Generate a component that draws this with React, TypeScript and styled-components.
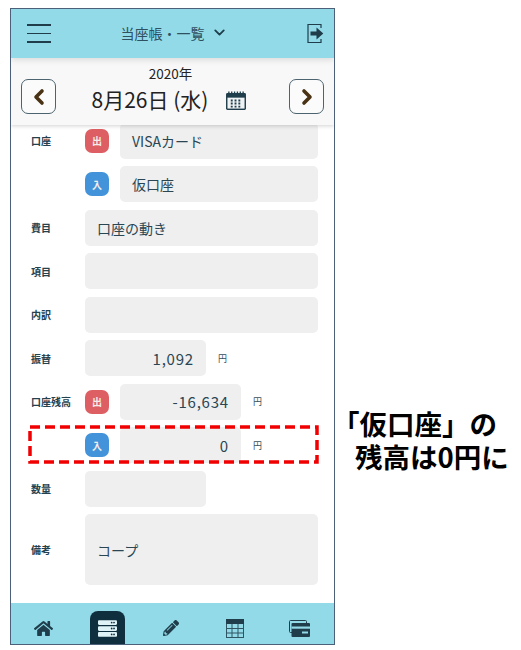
import styled, {createGlobalStyle} from "styled-components";
import {ChevronDown, ChevronLeft, ChevronRight} from "lucide-react";
import {FaHome, FaPencilAlt, FaServer} from "react-icons/fa";

const GlobalStyle = createGlobalStyle`
    * {
        box-sizing: border-box;
    }
    html, body {
        margin: 0;
        background: #fff;
    }
    body {
        font-family: "Noto Sans CJK JP", "Noto Sans", sans-serif;
        color: #1f3d4a;
    }
`

type RowData = {
    label?: string;
    badge?: "out" | "in";
    value?: string;
    short?: boolean;
    number?: boolean;
    unit?: boolean;
    tall?: boolean;
    marked?: boolean;
}

const rows: RowData[] = [
    {label: "口座", badge: "out", value: "VISAカード"},
    {badge: "in", value: "仮口座"},
    {label: "費目", value: "口座の動き"},
    {label: "項目"},
    {label: "内訳"},
    {label: "振替", value: "1,092", short: true, number: true, unit: true},
    {label: "口座残高", badge: "out", value: "-16,634", short: true, number: true, unit: true},
    {badge: "in", value: "0", short: true, number: true, unit: true, marked: true},
    {label: "数量", short: true},
    {label: "備考", value: "コープ", tall: true},
]

const Row = ({label, badge, value, short, number, unit, tall, marked}: RowData) => (
    <FormRow $tall={tall}>
        <Label>{label}</Label>
        {badge && <Badge $kind={badge}>{badge === "out" ? "出" : "入"}</Badge>}
        <Field $short={short} $badged={!!badge} $number={number}>{value}</Field>
        {unit && <Unit>円</Unit>}
        {marked && (
            <DashedMark width="291" height="39" viewBox="0 0 291 39">
                <rect x="2" y="2" width="287" height="35" fill="none" stroke="#f00000" strokeWidth="3.5" strokeDasharray="10 5"/>
            </DashedMark>
        )}
    </FormRow>
)

export default function App() {
    return (
        <Page>
            <GlobalStyle/>
            <Phone>
                <Header>
                    <Burger>
                        <span/>
                        <span/>
                        <span/>
                    </Burger>
                    <HeaderTitle>
                        当座帳・一覧
                        <ChevronDown size={17} strokeWidth={2.6}/>
                    </HeaderTitle>
                    <svg width="18" height="21" viewBox="0 0 18 21">
                        <path d="M14 5V1.5H1v18h13V16" fill="none" stroke="#1f3d4a" strokeWidth="1.2"/>
                        <path d="M3.5 8.5h6V4.6l6.8 5.9-6.8 5.9v-3.9h-6z" fill="#1f3d4a"/>
                    </svg>
                </Header>
                <DateBar>
                    <NavButton><ChevronLeft size={24} strokeWidth={3.6}/></NavButton>
                    <DateBlock>
                        <Year>2020年</Year>
                        <DateLine>
                            8月26日 (水)
                            <svg width="20" height="19" viewBox="0 0 21 20">
                                <rect y="2" width="21" height="18" rx="1.5" fill="#1f3d4a"/>
                                <rect x="1.5" y="7" width="18" height="11.5" fill="#eef2f3"/>
                                <path d="M3 0.5v3M6 0.5v3M9 0.5v3M12 0.5v3M15 0.5v3M18 0.5v3" stroke="#1f3d4a" strokeWidth="1.4"/>
                                <path d="M5 9h2v2H5zM9 9h2v2H9zM13 9h2v2h-2zM5 12.2h2v2H5zM9 12.2h2v2H9zM13 12.2h2v2h-2zM9 15.4h2v2H9zM13 15.4h2v2h-2zM5 15.4h2v2H5z" fill="#1f3d4a"/>
                            </svg>
                        </DateLine>
                    </DateBlock>
                    <NavButton><ChevronRight size={24} strokeWidth={3.6}/></NavButton>
                </DateBar>
                <Form>
                    {rows.map((row, i) => <Row key={i} {...row}/>)}
                </Form>
                <Footer>
                    <FooterItem><FaHome size={19}/></FooterItem>
                    <FooterItem $active><FaServer size={19}/></FooterItem>
                    <FooterItem><FaPencilAlt size={16}/></FooterItem>
                    <FooterItem>
                        <svg width="18" height="19" viewBox="0 0 18 19">
                            <rect x="0.5" y="0.5" width="17" height="18" fill="none" stroke="#2f5563"/>
                            <rect width="18" height="5" fill="#1f3d4a"/>
                            <path d="M6 5v13M12 5v13M1 9.5h16M1 14h16" stroke="#2f5563" strokeWidth="1"/>
                        </svg>
                    </FooterItem>
                    <FooterItem>
                        <svg width="21" height="17" viewBox="0 0 21 17">
                            <rect x="0.5" y="0.5" width="17" height="12" rx="1" fill="none" stroke="#1f3d4a"/>
                            <rect x="2.5" y="3" width="18.5" height="14" rx="1" fill="#1f3d4a"/>
                            <rect x="2.5" y="6.5" width="18.5" height="2.2" fill="#92dae8"/>
                            <rect x="13" y="11.5" width="6" height="2" fill="#92dae8"/>
                        </svg>
                    </FooterItem>
                </Footer>
            </Phone>
            <Callout>
                <CalloutLine>「仮口座」の</CalloutLine>
                <CalloutLine $indent>残高は0円に</CalloutLine>
            </Callout>
        </Page>
    );
}

const Page = styled.div`
    width: 521px;
    height: 650px;
    padding: 8px 0 0 10px;
    display: flex;
    overflow: hidden;
`

const Phone = styled.div`
    width: 325px;
    height: 637px;
    border: 1px solid #4c6079;
    display: flex;
    flex-direction: column;
    overflow: hidden;
    flex-shrink: 0;
`

const Header = styled.header`
    height: 49px;
    flex-shrink: 0;
    background: #92dae8;
    display: flex;
    align-items: center;
    justify-content: space-between;
    padding: 0 9px 0 16px;
    box-shadow: 0 2px 6px rgba(0, 0, 0, 0.12);
    position: relative;
    z-index: 2;
`

const Burger = styled.div`
    width: 24px;
    display: flex;
    flex-direction: column;
    gap: 7px;

    span {
        height: 1.5px;
        background: #1f3d4a;
    }
`

const HeaderTitle = styled.div`
    display: flex;
    align-items: center;
    gap: 6px;
    font-size: 14px;
    line-height: 20px;
    color: #2f5060;
    margin: -2px 10px 0 0;

    svg {
        color: #1f3d4a;
    }
`

const DateBar = styled.div`
    height: 67px;
    flex-shrink: 0;
    background: #f8f8f8;
    display: flex;
    align-items: flex-start;
    justify-content: space-between;
    padding: 21px 10px 0 10px;
    box-shadow: 0 1px 4px rgba(0, 0, 0, 0.18);
    position: relative;
    z-index: 1;
`

const NavButton = styled.button`
    width: 35px;
    height: 35px;
    padding: 0;
    background: #fbfbfb;
    border: 1px solid #4c6470;
    border-radius: 7px;
    color: #4a3214;
    display: flex;
    align-items: center;
    justify-content: center;
`

const DateBlock = styled.div`
    display: flex;
    flex-direction: column;
    align-items: center;
    margin: -15px 7px 0 0;
    color: #222;
`

const Year = styled.div`
    font-size: 13.5px;
    line-height: 18px;
    margin-right: -3px;
`

const DateLine = styled.div`
    display: flex;
    align-items: center;
    gap: 18px;
    font-size: 21px;
    line-height: 30px;
    margin-top: 2px;

    svg {
        margin-top: 2px;
    }
`

const Form = styled.main`
    flex: 1;
    min-height: 0;
    background: #fff;
    padding: 0 16px 0 20px;
    margin-top: -2.5px;
    display: flex;
    flex-direction: column;
    gap: 7.5px;
`

const FormRow = styled.div<{ $tall?: boolean }>`
    display: flex;
    align-items: center;
    height: ${p => p.$tall ? "71px" : "36px"};
    flex-shrink: 0;
    position: relative;
`

const Label = styled.div`
    width: 54px;
    flex-shrink: 0;
    font-size: 10px;
    font-weight: 700;
    color: #25414e;
    white-space: nowrap;
`

const Badge = styled.div<{ $kind: "out" | "in" }>`
    width: 24px;
    height: 24px;
    margin-right: 11px;
    border-radius: 7px;
    flex-shrink: 0;
    background: ${p => p.$kind === "out" ? "#dd5f63" : "#4293d9"};
    color: #f4ecec;
    font-size: 10px;
    font-weight: 700;
    display: flex;
    align-items: center;
    justify-content: center;
`

const Field = styled.div<{ $short?: boolean; $badged?: boolean; $number?: boolean }>`
    width: ${p => p.$short ? "121px" : (p.$badged ? "198px" : "233px")};
    height: 100%;
    flex-shrink: 0;
    background: #efefef;
    border-radius: 5px;
    font-size: ${p => p.$number ? "15px" : "14px"};
    color: #2a4653;
    display: flex;
    align-items: center;
    justify-content: ${p => p.$number ? "flex-end" : "flex-start"};
    padding: 0 12px;
    letter-spacing: ${p => p.$number ? "0.8px" : "0"};
`

const Unit = styled.div`
    margin-left: 12px;
    font-size: 9px;
    color: #35505c;
`

const DashedMark = styled.svg`
    position: absolute;
    left: -3px;
    top: -2.5px;
`

const Footer = styled.footer`
    height: 41px;
    flex-shrink: 0;
    margin-top: auto;
    background: #92dae8;
    display: grid;
    grid-template-columns: repeat(5, 64px);
    justify-items: center;
    align-items: end;
`

const FooterItem = styled.div<{ $active?: boolean }>`
    width: ${p => p.$active ? "35px" : "40px"};
    height: 33px;
    display: flex;
    align-items: center;
    justify-content: center;
    color: ${p => p.$active ? "#dff3f7" : "#1f3d4a"};
    background: ${p => p.$active ? "#0f2f3f" : "transparent"};
    border-radius: 8px 8px 0 0;
    padding-top: 1px;
`

const Callout = styled.div`
    margin: 399px 0 0 -3px;
    color: #000;
    font-size: 27.5px;
    font-weight: 700;
    line-height: 33px;
    white-space: nowrap;
`

const CalloutLine = styled.div<{ $indent?: boolean }>`
    padding-left: ${p => p.$indent ? "23px" : "0"};
`
